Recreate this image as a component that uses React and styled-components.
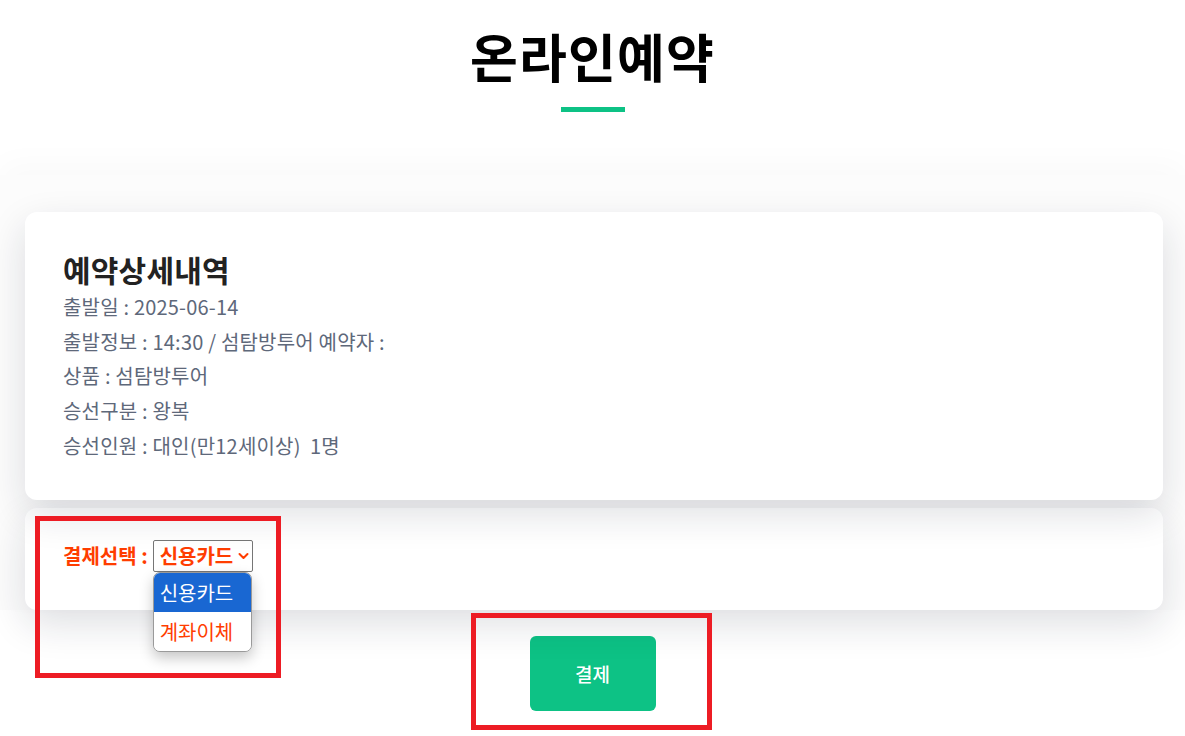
import React from 'react';
import styled, { createGlobalStyle } from 'styled-components';

const GlobalStyle = createGlobalStyle`
  html, body {
    margin: 0;
    padding: 0;
    background: #ffffff;
  }
  body {
    font-family: "Noto Sans CJK KR", "Noto Sans", sans-serif;
    color: #222;
  }
  * { box-sizing: border-box; }
`;

const Page = styled.div`
  position: relative;
  min-height: 736px;
  overflow: hidden;
`;

const Header = styled.header`
  padding-top: 20px;
  display: flex;
  flex-direction: column;
  align-items: center;
`;

const PageTitle = styled.h1`
  margin: 0;
  font-size: 52px;
  line-height: 72px;
  font-weight: 700;
  letter-spacing: 1.2px;
  color: #000;
`;

const TitleBar = styled.span`
  display: block;
  width: 64px;
  height: 5px;
  margin-top: 15px;
  background: #0dc285;
`;

const Section = styled.section`
  margin-top: 63px;
  padding: 37px 22px 0 25px;
  background: #fcfcfc;
  box-shadow: 0 -12px 30px rgba(0, 0, 0, 0.025);
  display: flex;
  flex-direction: column;
  gap: 8px;
`;

const Card = styled.div`
  position: relative;
  z-index: ${({ $layer }) => $layer};
  background: #fff;
  border-radius: 12px;
  padding: ${({ $pad }) => $pad};
  box-shadow: 0 14px 38px rgba(20, 30, 50, 0.14);
`;

const DetailTitle = styled.h2`
  margin: 0;
  font-size: 30px;
  line-height: 42px;
  font-weight: 700;
  letter-spacing: 0.2px;
  color: #222;
`;

const DetailLine = styled.p`
  margin: 0;
  font-size: 20px;
  line-height: 34.7px;
  letter-spacing: 0.2px;
  white-space: pre;
  color: #5e687a;
`;

const PayRow = styled.div`
  display: flex;
  align-items: center;
  height: 32px;
  gap: 5px;
`;

const PayLabel = styled.span`
  font-size: 20px;
  font-weight: 700;
  color: #ff3d00;
`;

const SelectWrap = styled.div`
  position: relative;
`;

const SelectBox = styled.div`
  display: flex;
  align-items: center;
  gap: 5px;
  height: 32px;
  padding: 0 3px 0 6px;
  border: 1px solid #767676;
  border-radius: 2px;
  background: #fff;
  font-size: 20px;
  font-weight: 700;
  color: #ff3d00;
`;

const OptionList = styled.ul`
  position: absolute;
  top: 32px;
  left: 0;
  width: 99px;
  margin: 0;
  padding: 0;
  list-style: none;
  background: #fff;
  border: 1px solid #9a9a9a;
  border-radius: 7px;
  overflow: hidden;
  box-shadow: 0 6px 14px rgba(0, 0, 0, 0.22);
`;

const Option = styled.li`
  height: 39px;
  display: flex;
  align-items: center;
  padding-left: 6px;
  font-size: 20px;
  background: ${({ $active }) => ($active ? '#1967d2' : '#fff')};
  color: ${({ $active }) => ($active ? '#fff' : '#ff3d00')};
`;

const Actions = styled.div`
  display: flex;
  justify-content: center;
  padding: 26px 0 40px;
`;

const PayButton = styled.button`
  width: 126px;
  height: 75px;
  border: none;
  border-radius: 6px;
  background: #0dc285;
  color: #fff;
  font-family: inherit;
  font-size: 19px;
  font-weight: 500;
  cursor: pointer;
`;

const Marker = styled.div`
  position: absolute;
  border: 5px solid #ed1c24;
  pointer-events: none;
  z-index: 20;
`;

const details = [
  '출발일 : 2025-06-14',
  '출발정보 : 14:30 / 섬탐방투어 예약자 :',
  '상품 : 섬탐방투어',
  '승선구분 : 왕복',
  '승선인원 : 대인(만12세이상)  1명',
];

const Chevron = () => (
  <svg width="11" height="8" viewBox="0 0 11 8">
    <polyline points="1.5,2 5.5,6 9.5,2" fill="none" stroke="#ff3d00" strokeWidth="2" strokeLinecap="round" strokeLinejoin="round" />
  </svg>
);

export default function App() {
  return (
    <>
      <GlobalStyle />
      <Page>
        <Header>
          <PageTitle>온라인예약</PageTitle>
          <TitleBar />
        </Header>

        <Section>
          <Card $layer={2} $pad="36px 38px 36px 38px">
            <DetailTitle>예약상세내역</DetailTitle>
            {details.map((line) => (
              <DetailLine key={line}>{line}</DetailLine>
            ))}
          </Card>

          <Card $layer={1} $pad="32px 38px 38px 38px">
            <PayRow>
              <PayLabel>결제선택 :</PayLabel>
              <SelectWrap>
                <SelectBox>
                  신용카드
                  <Chevron />
                </SelectBox>
                <OptionList>
                  <Option $active>신용카드</Option>
                  <Option>계좌이체</Option>
                </OptionList>
              </SelectWrap>
            </PayRow>
          </Card>
        </Section>

        <Actions>
          <PayButton>결제</PayButton>
        </Actions>

        <Marker style={{ left: 35, top: 516, width: 246, height: 162 }} />
        <Marker style={{ left: 471, top: 613, width: 241, height: 117 }} />
      </Page>
    </>
  );
}
